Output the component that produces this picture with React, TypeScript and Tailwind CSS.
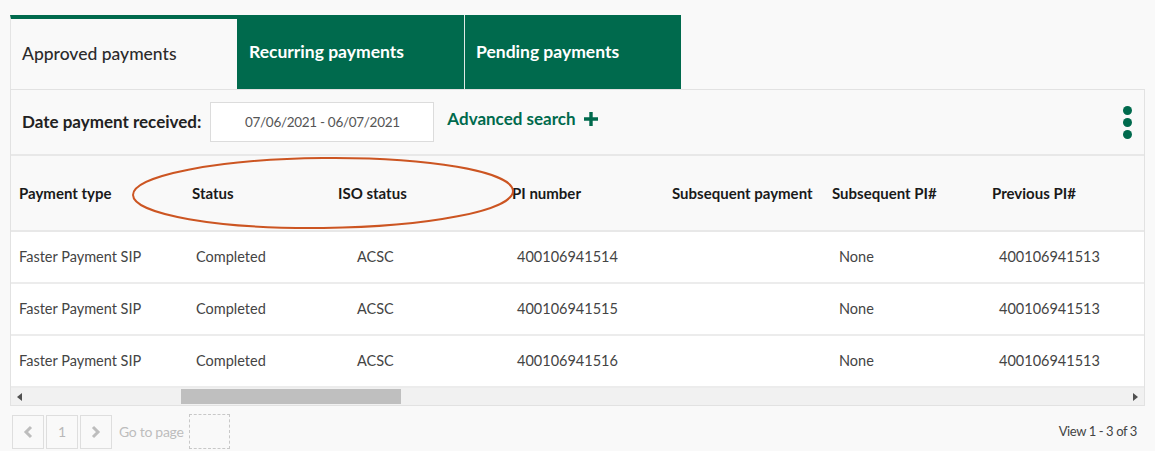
import React from "react";

const font = { fontFamily: "Lato, 'Open Sans', sans-serif" };

type Row = {
  type: string;
  status: string;
  iso: string;
  pi: string;
  subPay: string;
  subPi: string;
  prevPi: string;
};

const rows: Row[] = [
  { type: "Faster Payment SIP", status: "Completed", iso: "ACSC", pi: "400106941514", subPay: "", subPi: "None", prevPi: "400106941513" },
  { type: "Faster Payment SIP", status: "Completed", iso: "ACSC", pi: "400106941515", subPay: "", subPi: "None", prevPi: "400106941513" },
  { type: "Faster Payment SIP", status: "Completed", iso: "ACSC", pi: "400106941516", subPay: "", subPi: "None", prevPi: "400106941513" },
];

const gridCols = "grid grid-cols-[170px_150px_175px_160px_160px_160px_1fr]";

function Tabs() {
  return (
    <div className="flex h-[74px] pl-[10px]">
      <div className="flex w-[227px] items-center border-t-[4px] border-l border-[#006a4d] border-l-[#e4e4e4] bg-[#f9f9f9] pl-[11px] text-[17.5px] font-medium text-[#2b2b2b]">
        Approved payments
      </div>
      <div className="flex w-[227px] items-center bg-[#006a4d] pl-[12px] text-[17.5px] font-bold text-white">
        Recurring payments
      </div>
      <div className="w-px bg-[#dfe9e5]" />
      <div className="flex w-[216px] items-center bg-[#006a4d] pl-[11px] text-[17.5px] font-bold text-white">
        Pending payments
      </div>
    </div>
  );
}

function FilterBar() {
  return (
    <div className="flex h-[66px] items-center border-b-2 border-[#e8e8e8] pl-[11px] pr-[12px]">
      <span className="text-[17px] font-bold text-[#222]">Date payment received:</span>
      <div className="ml-[9px] flex h-[40px] w-[224px] items-center justify-center border border-[#dcdcdc] bg-white text-[13.5px] tracking-[-0.3px] text-[#555]">
        07/06/2021 - 06/07/2021
      </div>
      <button className="ml-[13px] mb-[6px] flex items-center gap-[8px] text-[17px] font-bold text-[#006a4d]">
        Advanced search
        <svg width="14" height="14" viewBox="0 0 14 14">
          <path d="M7 0v14M0 7h14" stroke="#006a4d" strokeWidth="3.4" />
        </svg>
      </button>
      <div className="ml-auto flex flex-col gap-[3px]">
        <span className="h-[9px] w-[9px] rounded-full bg-[#006a4d]" />
        <span className="h-[9px] w-[9px] rounded-full bg-[#006a4d]" />
        <span className="h-[9px] w-[9px] rounded-full bg-[#006a4d]" />
      </div>
    </div>
  );
}

function HeaderRow() {
  return (
    <div className={`${gridCols} relative h-[76px] items-center border-b-2 border-[#e8e8e8] text-[15px] font-bold text-[#1a1a1a]`}>
      <div className="pl-[8px]">Payment type</div>
      <div className="pl-[11px]">Status</div>
      <div className="pl-[7px]">ISO status</div>
      <div className="pl-[6px]">PI number</div>
      <div className="pl-[6px]">Subsequent payment</div>
      <div className="pl-[6px]">Subsequent PI#</div>
      <div className="pl-[6px]">Previous PI#</div>
      <svg
        className="pointer-events-none absolute left-[109px] top-[0px]"
        width="410"
        height="76"
        viewBox="0 0 410 76"
      >
        <ellipse
          cx="203"
          cy="37"
          rx="190"
          ry="35"
          fill="none"
          stroke="#cc5522"
          strokeWidth="2"
          transform="rotate(-0.6 203 37)"
        />
      </svg>
    </div>
  );
}

function DataRow({ row }: { row: Row }) {
  return (
    <div className={`${gridCols} h-[52px] items-center border-b-2 border-[#ececec] bg-white text-[14.5px] text-[#444]`}>
      <div className="pl-[8px]">{row.type}</div>
      <div className="pl-[15px]">{row.status}</div>
      <div className="pl-[26px]">{row.iso}</div>
      <div className="pl-[11px]">{row.pi}</div>
      <div className="pl-[11px]">{row.subPay}</div>
      <div className="pl-[13px]">{row.subPi}</div>
      <div className="pl-[13px]">{row.prevPi}</div>
    </div>
  );
}

function ScrollBar() {
  return (
    <div className="flex h-[17px] items-center bg-[#f1f1f1]">
      <svg className="ml-[6px]" width="6" height="8" viewBox="0 0 6 8">
        <path d="M5 0v8L0 4z" fill="#505050" />
      </svg>
      <div className="ml-[158px] h-[15px] w-[220px] bg-[#bfbfbf]" />
      <svg className="ml-auto mr-[6px]" width="6" height="8" viewBox="0 0 6 8">
        <path d="M1 0v8l5-4z" fill="#505050" />
      </svg>
    </div>
  );
}

function Pager() {
  return (
    <div className="flex items-center pl-[12px] pr-[18px] pt-[8px]">
      <div className="flex gap-[2px]">
        <div className="flex h-[34px] w-[32px] items-center justify-center border border-[#dedede]">
          <svg width="10" height="14" viewBox="0 0 10 14">
            <path d="M8 2L3 7l5 5" fill="none" stroke="#bdbdbd" strokeWidth="3" />
          </svg>
        </div>
        <div className="flex h-[34px] w-[32px] items-center justify-center border border-[#dedede] text-[14px] text-[#b8b8b8]">
          1
        </div>
        <div className="flex h-[34px] w-[32px] items-center justify-center border border-[#dedede]">
          <svg width="10" height="14" viewBox="0 0 10 14">
            <path d="M2 2l5 5-5 5" fill="none" stroke="#bdbdbd" strokeWidth="3" />
          </svg>
        </div>
      </div>
      <span className="ml-[7px] text-[14px] tracking-[-0.3px] text-[#bdbdbd]">Go to page</span>
      <div className="ml-[5px] h-[35px] w-[41px] border border-dashed border-[#c8c8c8]" />
      <span className="ml-auto text-[13px] tracking-[-0.4px] text-[#444]">View 1 - 3 of 3</span>
    </div>
  );
}

export default function App() {
  return (
    <div className="min-h-[466px] bg-white" style={font}>
      <div className="h-[451px] w-[1155px] bg-[#f9f9f9] pt-[15px]">
        <Tabs />
        <div className="ml-[10px] w-[1135px] border border-[#e2e2e2]">
          <FilterBar />
          <HeaderRow />
          {rows.map((r) => (
            <DataRow key={r.pi} row={r} />
          ))}
          <ScrollBar />
        </div>
        <Pager />
      </div>
    </div>
  );
}
